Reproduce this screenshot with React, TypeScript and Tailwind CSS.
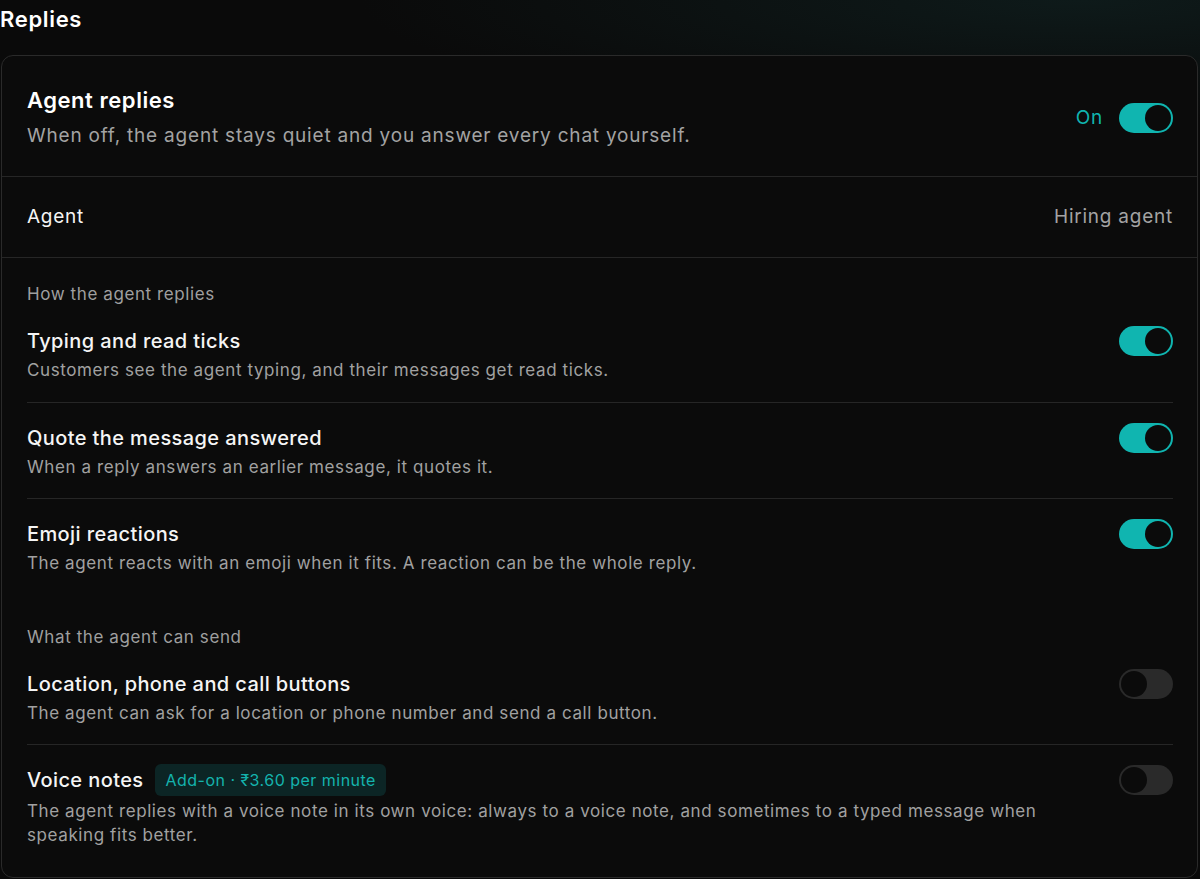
import { useState } from "react";

type Setting = {
  id: string;
  title: string;
  description: string;
  badge?: string;
  on: boolean;
};

const Toggle = ({ on, onChange }: { on: boolean; onChange: () => void }) => (
  <button
    onClick={onChange}
    className={`relative h-[30px] w-[54px] shrink-0 rounded-full ${
      on ? "bg-[#10b5b0]" : "bg-[#2a2a2a]"
    }`}
  >
    <span
      className={`absolute top-[2px] h-[26px] w-[26px] rounded-full bg-[#0b0b0b] ${
        on ? "left-[26px]" : "left-[2px]"
      }`}
    />
  </button>
);

const SettingRow = ({
  item,
  first,
  onToggle,
}: {
  item: Setting;
  first: boolean;
  onToggle: () => void;
}) => (
  <div
    className={`flex items-start justify-between gap-10 pt-[22px] pb-[19.5px] ${
      first ? "" : "border-t border-[#262626]"
    }`}
  >
    <div className="max-w-[1030px]">
      <div className="flex h-[26px] items-center gap-[12px]">
        <span className="text-[20px] font-medium tracking-[0.02em] text-[#f5f5f5]">
          {item.title}
        </span>
        {item.badge && (
          <span className="rounded-md bg-[#0c2525] px-[10px] py-[5px] text-[16px] leading-[22px] tracking-[0.03em] text-[#14b3ad]">
            {item.badge}
          </span>
        )}
      </div>
      <p
        className={`${
          item.badge ? "mt-[6px]" : "mt-[4px]"
        } text-[17px] leading-[24px] tracking-[0.035em] text-[#a1a1a1]`}
      >
        {item.description}
      </p>
    </div>
    <div className="flex h-[26px] items-center">
      <Toggle on={item.on} onChange={onToggle} />
    </div>
  </div>
);

const App = () => {
  const [agentOn, setAgentOn] = useState(true);
  const [groups, setGroups] = useState<{ label: string; items: Setting[] }[]>([
    {
      label: "How the agent replies",
      items: [
        {
          id: "typing",
          title: "Typing and read ticks",
          description:
            "Customers see the agent typing, and their messages get read ticks.",
          on: true,
        },
        {
          id: "quote",
          title: "Quote the message answered",
          description: "When a reply answers an earlier message, it quotes it.",
          on: true,
        },
        {
          id: "emoji",
          title: "Emoji reactions",
          description:
            "The agent reacts with an emoji when it fits. A reaction can be the whole reply.",
          on: true,
        },
      ],
    },
    {
      label: "What the agent can send",
      items: [
        {
          id: "buttons",
          title: "Location, phone and call buttons",
          description:
            "The agent can ask for a location or phone number and send a call button.",
          on: false,
        },
        {
          id: "voice",
          title: "Voice notes",
          badge: "Add-on · ₹3.60 per minute",
          description:
            "The agent replies with a voice note in its own voice: always to a voice note, and sometimes to a typed message when speaking fits better.",
          on: false,
        },
      ],
    },
  ]);

  const flip = (id: string) =>
    setGroups((gs) =>
      gs.map((g) => ({
        ...g,
        items: g.items.map((i) => (i.id === id ? { ...i, on: !i.on } : i)),
      }))
    );

  return (
    <div className="min-h-screen bg-[#0a0a0a] bg-[radial-gradient(ellipse_60%_120px_at_90%_0%,#0e1a1a,transparent)] font-['Inter',sans-serif] antialiased">
      <h1 className="h-[38px] text-[22px] font-semibold leading-[38px] tracking-[0.03em] text-white">
        Replies
      </h1>

      <div className="mt-[17px] ml-[1px] mr-[2px] rounded-xl border border-[#2a2a2a] bg-[#0b0b0b]">
        {/* Master switch */}
        <div className="flex items-center justify-between pl-[25px] pr-[24px] pt-[29px] pb-[25px]">
          <div>
            <h2 className="text-[22px] font-semibold leading-[30px] tracking-[0.025em] text-white">
              Agent replies
            </h2>
            <p className="mt-[6px] text-[19px] leading-[30px] tracking-[0.042em] text-[#a3a3a3]">
              When off, the agent stays quiet and you answer every chat yourself.
            </p>
          </div>
          <div className="flex items-center gap-4">
            <span className="text-[19px] tracking-[0.04em] text-[#10b5b0]">
              {agentOn ? "On" : "Off"}
            </span>
            <Toggle on={agentOn} onChange={() => setAgentOn(!agentOn)} />
          </div>
        </div>

        {/* Agent picker */}
        <div className="flex h-[81px] items-center justify-between border-t border-[#262626] pl-[25px] pr-[24px]">
          <span className="text-[19px] tracking-[0.04em] text-[#f5f5f5]">Agent</span>
          <span className="text-[19px] tracking-[0.04em] text-[#a3a3a3]">Hiring agent</span>
        </div>

        {/* Grouped settings */}
        <div className="border-t border-[#262626] pb-[4px]">
          {groups.map((group) => (
            <div key={group.label} className="pl-[25px] pr-[24px] pt-[24px] pb-[6px]">
              <div className="text-[17px] leading-[24px] tracking-[0.035em] text-[#9f9f9f]">
                {group.label}
              </div>
              {group.items.map((item, idx) => (
                <SettingRow
                  key={item.id}
                  item={item}
                  first={idx === 0}
                  onToggle={() => flip(item.id)}
                />
              ))}
            </div>
          ))}
        </div>
      </div>
    </div>
  );
};

export default App;
